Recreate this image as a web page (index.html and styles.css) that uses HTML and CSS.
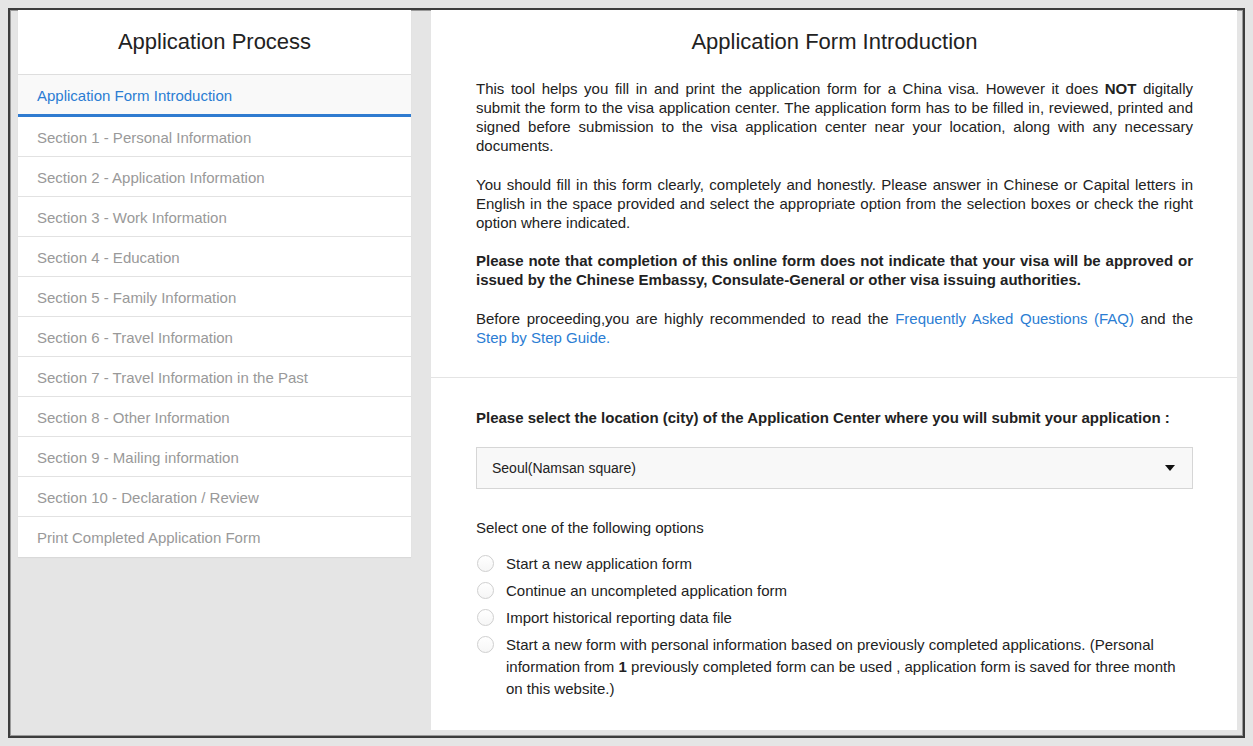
FILE: index.html
```html
<!DOCTYPE html>
<html lang="en">
<head>
<meta charset="utf-8">
<title>Application Form Introduction</title>
<link rel="stylesheet" href="styles.css">
</head>
<body>
<div class="frame">
  <aside class="sidebar">
    <div class="side-head">Application Process</div>
    <ul class="steps">
      <li class="step active">Application Form Introduction</li>
      <li class="step">Section 1 - Personal Information</li>
      <li class="step">Section 2 - Application Information</li>
      <li class="step">Section 3 - Work Information</li>
      <li class="step">Section 4 - Education</li>
      <li class="step">Section 5 - Family Information</li>
      <li class="step">Section 6 - Travel Information</li>
      <li class="step">Section 7 - Travel Information in the Past</li>
      <li class="step">Section 8 - Other Information</li>
      <li class="step">Section 9 - Mailing information</li>
      <li class="step">Section 10 - Declaration / Review</li>
      <li class="step last">Print Completed Application Form</li>
    </ul>
  </aside>
  <main class="panel">
    <section class="intro">
      <h1 class="title">Application Form Introduction</h1>
      <p class="para">This tool helps you fill in and print the application form for a China visa. However it does <b>NOT</b> digitally submit the form to the visa application center. The application form has to be filled in, reviewed, printed and signed before submission to the visa application center near your location, along with any necessary documents.</p>
      <p class="para">You should fill in this form clearly, completely and honestly. Please answer in Chinese or Capital letters in English in the space provided and select the appropriate option from the selection boxes or check the right option where indicated.</p>
      <p class="para strong">Please note that completion of this online form does not indicate that your visa will be approved or issued by the Chinese Embassy, Consulate-General or other visa issuing authorities.</p>
      <p class="para">Before proceeding,you are highly recommended to read the <a class="link" href="#">Frequently Asked Questions (FAQ)</a> and the <a class="link" href="#">Step by Step Guide.</a></p>
    </section>
    <section class="choose">
      <div class="label-strong">Please select the location (city) of the Application Center where you will submit your application :</div>
      <div class="select">
        <span class="select-text">Seoul(Namsan square)</span>
        <svg class="caret" width="10" height="6" viewBox="0 0 10 6"><path d="M0 0 H10 L5 6 Z" fill="#111"/></svg>
      </div>
      <div class="opt-title">Select one of the following options</div>
      <ul class="options">
        <li class="option"><span class="radio"></span><span class="opt-text">Start a new application form</span></li>
        <li class="option"><span class="radio"></span><span class="opt-text">Continue an uncompleted application form</span></li>
        <li class="option"><span class="radio"></span><span class="opt-text">Import historical reporting data file</span></li>
        <li class="option"><span class="radio"></span><span class="opt-text">Start a new form with personal information based on previously completed applications. (Personal information from <b>1</b> previously completed form can be used , application form is saved for three month on this website.)</span></li>
      </ul>
    </section>
  </main>
</div>
</body>
</html>
```
FILE: styles.css
```css
* { box-sizing: border-box; }
html, body {
  margin: 0;
  padding: 0;
  background: #e5e5e5;
  font-family: "Liberation Sans", Arial, Helvetica, sans-serif;
  color: #222;
}
.frame {
  margin: 8px;
  height: 730px;
  border: 2px solid #3d3d3d;
  box-shadow: inset 0 0 0 1px #9a9a9a;
  background: #e5e5e5;
  display: flex;
  align-items: stretch;
  gap: 20px;
  padding: 0 6px 6px 8px;
}
.sidebar {
  width: 393px;
  flex: none;
  align-self: flex-start;
  background: #fff;
  box-shadow: 0 1px 1px rgba(0,0,0,0.05);
}
.side-head {
  height: 65px;
  border-bottom: 1px solid #dedede;
  font-size: 22px;
  line-height: 30px;
  padding-top: 17px;
  text-align: center;
  color: #222;
}
.steps {
  list-style: none;
  margin: 0;
  padding: 0;
}
.step {
  height: 40px;
  padding-top: 1px;
  line-height: 40px;
  border-bottom: 1px solid #e2e2e2;
  padding-left: 19px;
  font-size: 15px;
  color: #999;
  overflow: hidden;
}
.step.active {
  height: 42px;
  padding-top: 1px;
  line-height: 39px;
  background: #f9f9f9;
  color: #2b7dd3;
  border-bottom: 3px solid #2f7bd0;
}
.step.last { border-bottom: none; }
.panel {
  flex: 1;
  background: #fff;
  display: flex;
  flex-direction: column;
}
.intro {
  padding: 17px 44px 30px 45px;
  border-bottom: 1px solid #e4e4e4;
}
.title {
  margin: 0 0 22px;
  font-size: 22px;
  line-height: 30px;
  font-weight: normal;
  text-align: center;
  color: #222;
}
.para {
  margin: 0 0 19.5px;
  font-size: 15px;
  line-height: 19px;
  text-align: justify;
  color: #222;
}
.para:last-child { margin-bottom: 0; }
.para.strong { font-weight: bold; }
.link { color: #2b7dd3; text-decoration: none; }
.choose {
  padding: 30px 44px 0 45px;
}
.label-strong {
  font-size: 15px;
  line-height: 19px;
  font-weight: bold;
  color: #222;
}
.select {
  margin-top: 20px;
  height: 42px;
  border: 1px solid #d6d6d6;
  background: #f8f8f8;
  display: flex;
  align-items: center;
  justify-content: space-between;
  padding: 0 17px 0 15px;
}
.select-text {
  font-size: 14px;
  color: #222;
}
.caret { display: block; }
.opt-title {
  margin-top: 29px;
  font-size: 15px;
  line-height: 19px;
  color: #222;
}
.options {
  list-style: none;
  margin: 16px 0 0;
  padding: 0;
}
.option {
  display: flex;
  align-items: flex-start;
  margin-bottom: 5px;
  font-size: 15px;
  line-height: 22px;
  color: #222;
}
.radio {
  flex: none;
  width: 17px;
  height: 17px;
  margin: 2px 12px 0 1px;
  border: 1px solid #cfcfcf;
  border-radius: 50%;
  background: linear-gradient(#fff, #f6f6f6);
}
.opt-text { flex: 1; }
```
